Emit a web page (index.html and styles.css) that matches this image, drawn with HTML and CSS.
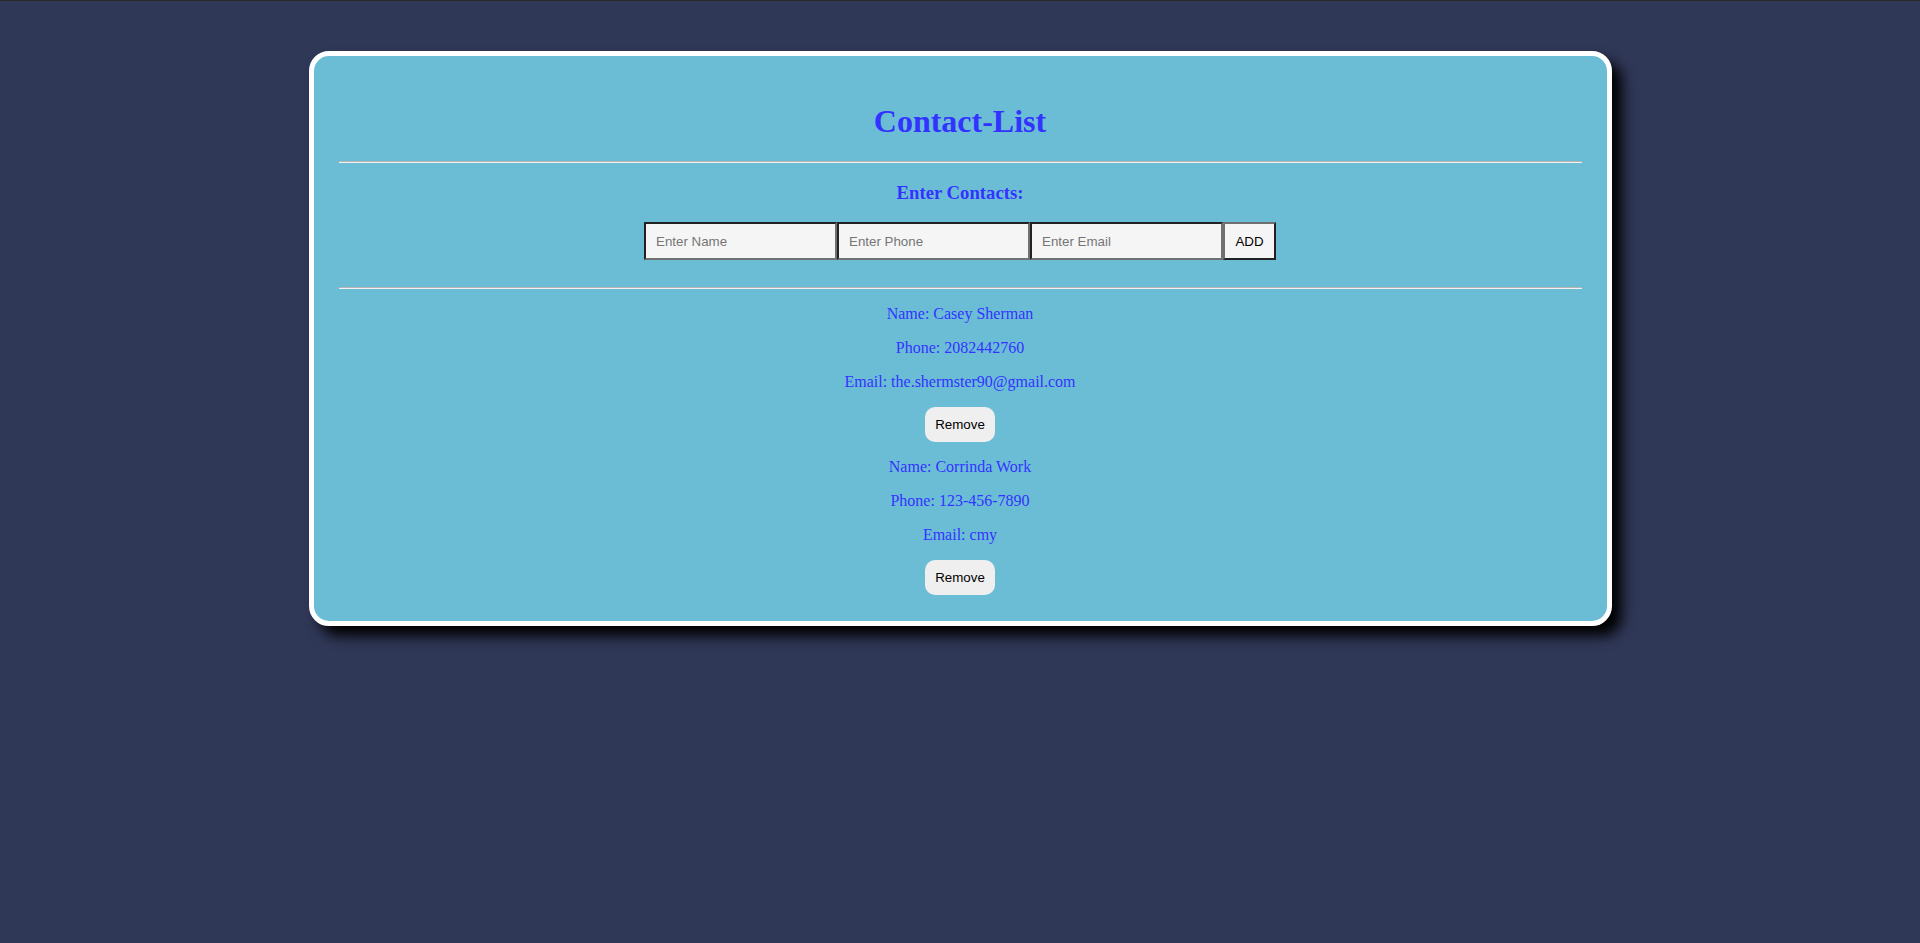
FILE: index.html
```html
<!DOCTYPE html>
<html lang="en">
<head>
<meta charset="utf-8">
<title>Contact-List</title>
<link rel="stylesheet" href="styles.css">
</head>
<body>
<div class="card">
  <h1 class="title">Contact-List</h1>
  <hr class="rule">
  <h3 class="subtitle">Enter Contacts:</h3>
  <div class="form">
    <input class="field" type="text" placeholder="Enter Name"><input class="field" type="text" placeholder="Enter Phone"><input class="field" type="text" placeholder="Enter Email"><button class="add-btn" type="button">ADD</button>
  </div>
  <hr class="rule">
  <div class="contacts">
    <div class="contact">
      <p class="line">Name: Casey Sherman</p>
      <p class="line">Phone: 2082442760</p>
      <p class="line">Email: the.shermster90@gmail.com</p>
      <button class="remove-btn" type="button">Remove</button>
    </div>
    <div class="contact">
      <p class="line">Name: Corrinda Work</p>
      <p class="line">Phone: 123-456-7890</p>
      <p class="line">Email: cmy</p>
      <button class="remove-btn" type="button">Remove</button>
    </div>
  </div>
</div>
</body>
</html>
```

FILE: styles.css
```css
html, body {
  margin: 0;
  padding: 0;
}

body {
  background: #303858;
  border-top: 1px solid #2a2a2a;
  min-height: 942px;
  font-family: "Liberation Serif", "Times New Roman", serif;
}

.card {
  width: 1243px;
  margin: 50px auto 0;
  padding: 26px 25px 26px;
  background: #6bbdd6;
  border: 5px solid #ffffff;
  border-radius: 20px;
  box-shadow: 10px 10px 14px #000000;
  text-align: center;
  color: #3333ff;
}

.title {
  font-size: 32px;
  font-weight: bold;
  margin: 21px 0;
}

.rule {
  margin: 8px 0;
  border: 0;
  border-top: 1px solid #b8b4b4;
  border-bottom: 1px solid #f2f2f2;
  height: 0;
}

.subtitle {
  font-size: 18.72px;
  font-weight: bold;
  margin: 18.72px 0;
}

.form {
  display: flex;
  justify-content: center;
  margin: 0 0 27px;
}

.field {
  box-sizing: border-box;
  width: 193px;
  height: 38px;
  margin: 0;
  padding: 0 10px;
  background: #f5f5f5;
  border: 2px solid;
  border-color: #222222 #707070 #707070 #222222;
  font-family: "Liberation Sans", Arial, sans-serif;
  font-size: 13.33px;
  color: #000;
}

.field::placeholder {
  color: #757575;
}

.add-btn {
  box-sizing: border-box;
  width: 53px;
  height: 38px;
  margin: 0;
  padding: 0;
  background: #f5f5f5;
  border: 2px solid;
  border-color: #707070 #222222 #222222 #707070;
  font-family: "Liberation Sans", Arial, sans-serif;
  font-size: 13.33px;
  color: #000;
}

.contacts,
.contact {
  display: block;
}

.line {
  margin: 16px 0;
  font-size: 16px;
  line-height: 18px;
}

.remove-btn {
  display: block;
  box-sizing: border-box;
  height: 35px;
  margin: 0 auto;
  padding: 0 10px;
  background: #efefef;
  border: none;
  border-radius: 10px;
  font-family: "Liberation Sans", Arial, sans-serif;
  font-size: 13.33px;
  color: #000;
}
```
